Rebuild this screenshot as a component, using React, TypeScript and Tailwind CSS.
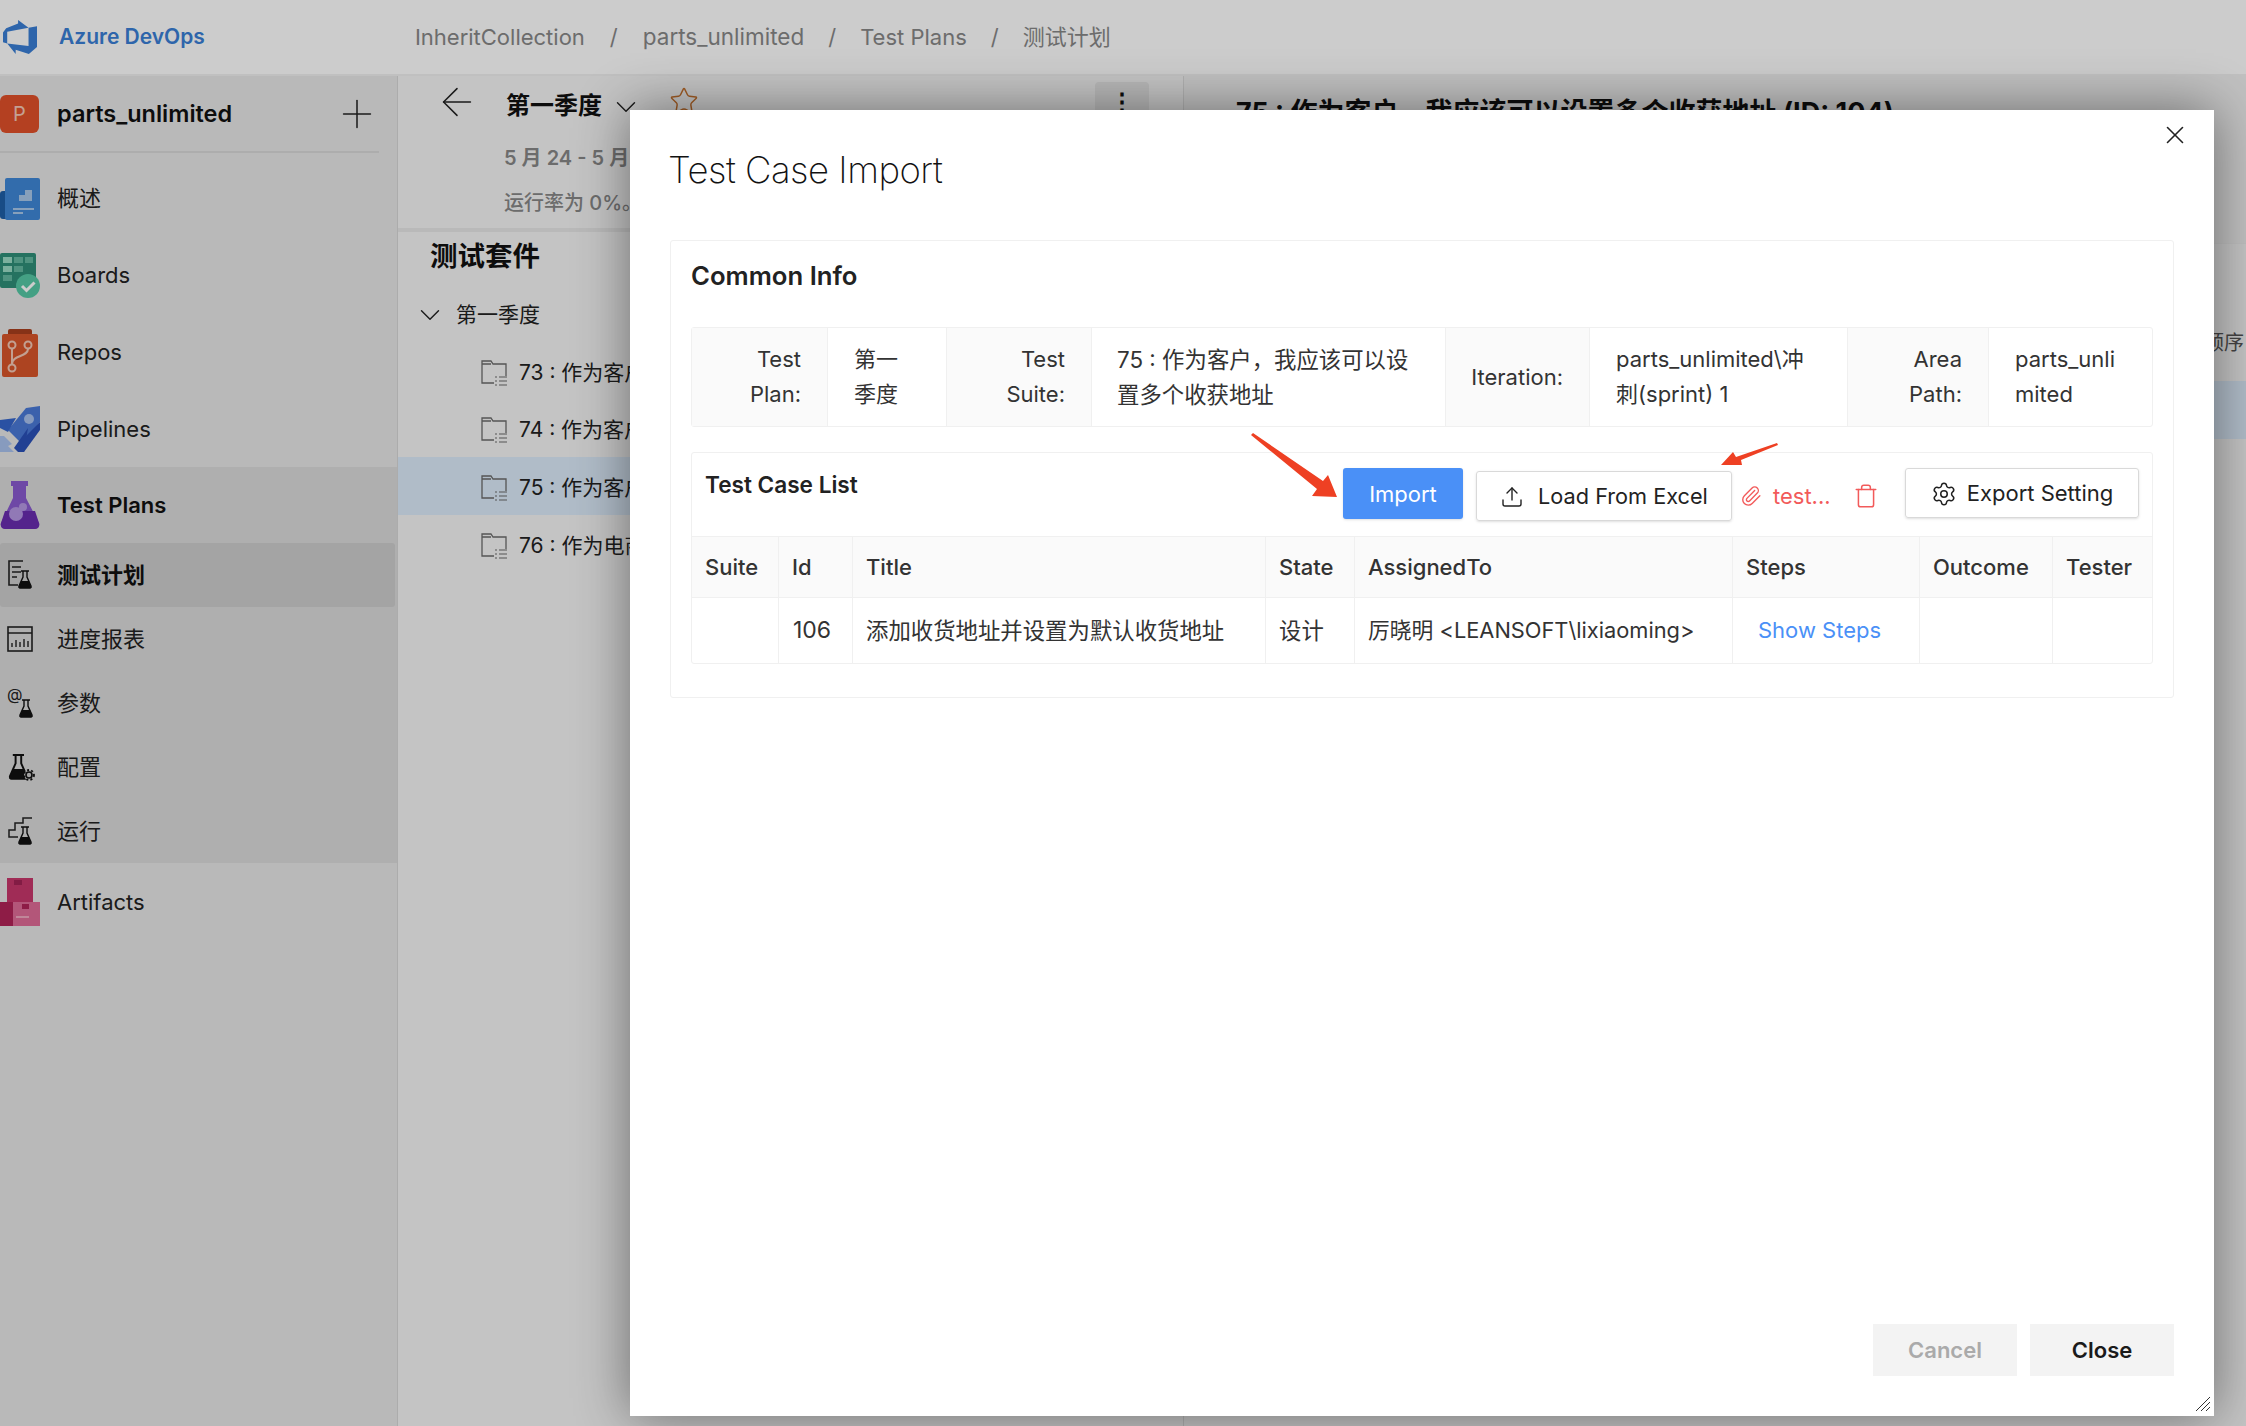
import React from 'react';
import { ArrowLeft, ChevronDown, Paperclip, Plus, Settings, Star, Trash, Upload, X } from 'lucide-react';

const FONT = "font-['Inter','Noto_Sans_CJK_SC',sans-serif]";

const AzureLogo = () => (
  <svg viewBox="0 0 24 24" className="h-[34px] w-[34px]" fill="#3a7fd6">
    <path d="M0 8.877L2.247 5.91l8.405-3.416V.022l7.37 5.393L2.966 8.338v8.225L0 15.707zm24-4.45v14.651l-5.753 4.9-9.303-3.057v3.056l-5.978-7.416 15.057 1.798V5.415z" />
  </svg>
);

const OverviewIcon = () => (
  <svg viewBox="0 0 40 44" className="h-[44px] w-[40px]">
    <rect x="0" y="14" width="14" height="28" rx="3" fill="#1f5fa8" />
    <rect x="5" y="1" width="35" height="42" rx="2" fill="#3f87d8" />
    <path d="M13 23h6v-6h6v-5h7v11z" fill="#a9c9ea" transform="translate(0 1)" />
    <rect x="13" y="31" width="21" height="2" fill="#a9c9ea" />
    <rect x="13" y="35" width="10" height="2" fill="#a9c9ea" />
  </svg>
);

const BoardsIcon = () => (
  <svg viewBox="0 0 40 46" className="h-[46px] w-[40px]">
    <rect x="0" y="0" width="36" height="35" rx="2" fill="#2f8f78" />
    <rect x="3" y="4" width="9" height="6" fill="#9bdcc6" />
    <rect x="14" y="4" width="9" height="6" fill="#63b8a0" />
    <rect x="25" y="4" width="8" height="6" fill="#63b8a0" />
    <rect x="3" y="13" width="9" height="6" fill="#9bdcc6" />
    <rect x="14" y="13" width="9" height="6" fill="#63b8a0" />
    <rect x="3" y="22" width="9" height="6" fill="#63b8a0" />
    <circle cx="28" cy="33" r="12" fill="#55c9a6" />
    <path d="M22 33l4.500 4.500 8-8" stroke="#fff" strokeWidth="3" fill="none" />
  </svg>
);

const ReposIcon = () => (
  <svg viewBox="0 0 40 48" className="h-[48px] w-[40px]">
    <rect x="8" y="0" width="24" height="8" rx="2" fill="#a93f1d" />
    <rect x="2" y="5" width="36" height="43" rx="2" fill="#d9562a" />
    <g stroke="#f3c9b6" strokeWidth="2" fill="none">
      <circle cx="12" cy="16" r="3.500" />
      <circle cx="28" cy="16" r="3.500" />
      <circle cx="12" cy="39" r="3.500" />
      <path d="M12 20v15M28 20c0 8-16 6-16 15" />
    </g>
  </svg>
);

const PipelinesIcon = () => (
  <svg viewBox="0 0 40 46" className="h-[46px] w-[40px]">
    <path d="M40 0v16L22 38 8 24 26 2z" fill="#4a7ad8" />
    <path d="M28 22L24 46h-6l-4-4z" fill="#2a50b8" />
    <path d="M40 16v8L24 46h-2l-4-8z" fill="#2a50b8" />
    <path d="M16 12L0 14v8l8 4z" fill="#3566cc" />
    <circle cx="29" cy="13" r="5" fill="#a9c2ee" />
    <path d="M0 30h4l8 8-4 2 6 6H0z" fill="#a9c2ee" />
  </svg>
);

const TestPlansIcon = () => (
  <svg viewBox="0 0 40 48" className="h-[48px] w-[40px]">
    <rect x="11" y="0" width="17" height="5" fill="#8a5ad0" />
    <path d="M13 5h13v12l13 25c1 3-1 6-4 6H5c-3 0-5-3-4-6l12-25z" fill="#8a5ad0" />
    <path d="M5 30h30l4 12c1 3-1 6-4 6H5c-3 0-5-3-4-6z" fill="#6a2cb0" />
    <circle cx="16" cy="33" r="7" fill="#b698e4" />
    <circle cx="23" cy="26" r="4" fill="#b698e4" />
  </svg>
);

const ArtifactsIcon = () => (
  <svg viewBox="0 0 40 48" className="h-[48px] w-[40px]">
    <rect x="7" y="0" width="26" height="24" fill="#c8386c" />
    <rect x="14" y="2" width="8" height="5" fill="#a32455" />
    <rect x="0" y="24" width="16" height="24" fill="#b22458" />
    <rect x="13" y="24" width="27" height="24" fill="#e06c98" />
    <rect x="22" y="26" width="7" height="5" fill="#b22458" />
    <rect x="16" y="38" width="13" height="2" fill="#f0a8c0" />
  </svg>
);

// little flask sits in the corner of most of the test plan sub icons
const Flask = ({ x, y, scale = 1 }: { x: number; y: number; scale?: number }) => (
  <g transform={`translate(${x} ${y}) scale(${scale})`}>
    <path d="M2 0h8M4 0v6L0 15c-.3 1 .3 2 1 2h10c.7 0 1.300-1 1-2L8 6V0" fill="none" stroke="#111" strokeWidth="1.400" />
    <path d="M2 10h8l2.500 7H-.5z" fill="#111" />
  </g>
);

const PlanIcon = () => (
  <svg viewBox="0 0 26 30" className="h-[30px] w-[26px]">
    <path d="M16 1H2v24h9" fill="none" stroke="#222" strokeWidth="1.600" />
    <path d="M5 7h9M5 12h9M5 17h5" stroke="#222" strokeWidth="1.400" />
    <Flask x={12} y={11} />
  </svg>
);

const ReportIcon = () => (
  <svg viewBox="0 0 26 26" className="h-[26px] w-[26px]">
    <rect x="1" y="1" width="24" height="24" fill="none" stroke="#222" strokeWidth="1.600" />
    <path d="M1 7h24M5 21v-4M9 21v-7M13 21v-5M17 21v-8M21 21v-6" stroke="#222" strokeWidth="1.400" />
  </svg>
);

const ParamIcon = () => (
  <svg viewBox="0 0 26 30" className="h-[30px] w-[26px]">
    <text x="0" y="12" fontSize="16" fill="#222" fontFamily="Inter">@</text>
    <Flask x={13} y={12} />
  </svg>
);

const ConfigIcon = () => (
  <svg viewBox="0 0 30 30" className="h-[30px] w-[30px]">
    <Flask x={3} y={3} scale={1.4} />
    <circle cx="22" cy="23" r="5" fill="#cbcbcb" />
    <circle cx="22" cy="23" r="3" fill="none" stroke="#111" strokeWidth="1.600" />
    <circle cx="22" cy="23" r="5" fill="none" stroke="#111" strokeWidth="1.800" strokeDasharray="2 2.200" />
  </svg>
);

const RunIcon = () => (
  <svg viewBox="0 0 26 30" className="h-[30px] w-[26px]">
    <path d="M11 21H2v-7h6V7h8V2h9" fill="none" stroke="#222" strokeWidth="1.500" />
    <Flask x={12} y={11} />
  </svg>
);

const SuiteIcon = () => (
  <svg viewBox="0 0 26 26" className="h-[26px] w-[26px] shrink-0">
    <path d="M13 23H1V1h9l2 3h13v12M1 4h9" fill="none" stroke="#6b6b6b" strokeWidth="1.300" />
    <path d="M18 17h8M18 21h8M18 25h8M14 17h2M14 21h2M14 25h2" stroke="#6b6b6b" strokeWidth="1.200" />
  </svg>
);

const navTop = [
  { label: '概述', icon: <OverviewIcon />, h: 'h-[77px]' },
  { label: 'Boards', icon: <BoardsIcon />, h: 'h-[77px]' },
  { label: 'Repos', icon: <ReposIcon />, h: 'h-[77px]' },
  { label: 'Pipelines', icon: <PipelinesIcon />, h: 'h-[76px]' },
];

const subNav = [
  { label: '进度报表', icon: <ReportIcon /> },
  { label: '参数', icon: <ParamIcon /> },
  { label: '配置', icon: <ConfigIcon /> },
  { label: '运行', icon: <RunIcon /> },
];

const suites = [
  { label: '73 : 作为客户，我应该', h: 'h-[58px]' },
  { label: '74 : 作为客户，我应该', h: 'h-[57px]' },
  { label: '75 : 作为客户，我应该', h: 'h-[58px]', selected: true },
  { label: '76 : 作为电商运营', h: 'h-[58px]' },
];

const columns = 'grid-cols-[87px_74px_413px_89px_378px_187px_133px_1fr]';
const headers = ['Suite', 'Id', 'Title', 'State', 'AssignedTo', 'Steps', 'Outcome', 'Tester'];

const Sidebar = () => (
  <aside className="w-[398px] shrink-0 border-r border-[#d8d8d8] bg-[#e8e8e8]">
    <div className="mb-[7px] mr-[18px] flex h-[77px] items-center border-b-2 border-[#d9d9d9]">
      <div className="flex h-[38px] w-[39px] items-center justify-center rounded-[6px] bg-[#e2512a] text-[20px] text-[#f6c9b8]">P</div>
      <span className="ml-[18px] text-[23.5px] font-semibold text-[#111]">parts_unlimited</span>
      <Plus className="-mr-[1px] ml-auto h-[46px] w-[46px] text-[#222]" strokeWidth={0.8} />
    </div>
    {navTop.map((item) => (
      <div key={item.label} className={`flex items-center ${item.h}`}>
        <div className="flex w-[57px] shrink-0">{item.icon}</div>
        <span className="text-[22px] text-[#222]">{item.label}</span>
      </div>
    ))}
    <div className="h-[396px] bg-[#dbdbdb]">
      <div className="flex h-[76px] items-center">
        <div className="flex w-[57px] shrink-0"><TestPlansIcon /></div>
        <span className="text-[22px] font-semibold text-[#111]">Test Plans</span>
      </div>
      <div className="mr-[2px] flex h-[64px] items-center rounded-[3px] bg-[#cecece]">
        <div className="flex w-[57px] shrink-0 pl-[7px]"><PlanIcon /></div>
        <span className="text-[22px] font-semibold text-[#111]">测试计划</span>
      </div>
      {subNav.map((item) => (
        <div key={item.label} className="flex h-[64px] items-center">
          <div className="flex w-[57px] shrink-0 pl-[7px]">{item.icon}</div>
          <span className="text-[22px] text-[#222]">{item.label}</span>
        </div>
      ))}
    </div>
    <div className="flex h-[78px] items-center">
      <div className="flex w-[57px] shrink-0"><ArtifactsIcon /></div>
      <span className="text-[22px] text-[#222]">Artifacts</span>
    </div>
  </aside>
);

const SuitePanel = () => (
  <section className="w-[786px] shrink-0 border-r border-[#dcdcdc] bg-[#f6f6f6]">
    <div className="h-[156px] border-b-4 border-[#e8e8e8]">
      <div className="flex h-[62px] items-center">
        <ArrowLeft className="-mt-[10px] ml-[36px] h-[46px] w-[46px] text-[#222]" strokeWidth={0.8} />
        <span className="-mt-[2px] ml-[26px] w-[96px] whitespace-nowrap text-[24px] font-semibold text-[#111]">第一季度</span>
        <ChevronDown className="ml-[7px] h-[34px] w-[34px] text-[#222]" strokeWidth={1} />
        <Star className="-mt-[12px] ml-[26px] h-[30px] w-[30px] text-[#c9742f]" strokeWidth={1.2} />
        <div className="ml-[396px] mt-[6px] flex h-[40px] w-[54px] items-center justify-center self-start rounded-[4px] bg-[#e6e6e6] text-[24px] font-bold text-[#111]">⋮</div>
      </div>
      <div className="ml-[106px] mt-[5px] text-[20px] font-semibold text-[#888]">5 月 24 - 5 月 30</div>
      <div className="ml-[106px] mt-[15px] text-[20px] font-medium text-[#888]">运行率为 0%。</div>
    </div>
    <h2 className="ml-[32px] mt-[3px] text-[27.5px] leading-[42px] font-bold text-[#111]">测试套件</h2>
    <div className="mt-[20px] flex h-[36px] items-center">
      <ChevronDown className="ml-[15px] h-[34px] w-[34px] text-[#222]" strokeWidth={1} />
      <span className="ml-[9px] text-[21px] text-[#222]">第一季度</span>
    </div>
    <div className="mt-[9px]">
      {suites.map((s) => (
        <div key={s.label} className={`flex items-center pt-[3px] ${s.h} ${s.selected ? 'bg-[#dcebfa]' : ''}`}>
          <div className="ml-[83px]"><SuiteIcon /></div>
          <span className="ml-[12px] text-[21px] text-[#222]">{s.label}</span>
        </div>
      ))}
    </div>
  </section>
);

const DetailPanel = () => (
  <section className="min-w-0 flex-1 bg-[#f6f6f6]">
    <div className="h-[168px] border-b border-[#eee] bg-[#f0f0f0] pl-[52px] pt-[17px]">
      <div className="whitespace-nowrap text-[27px] font-bold text-[#111]">75 : 作为客户，我应该可以设置多个收获地址 (ID: 104)</div>
    </div>
    <div className="flex h-[137px] items-center justify-end pt-[60px] pr-[2px] text-[20px] text-[#555]">执行顺序</div>
    <div className="h-[58px] bg-[#dcebfa]" />
  </section>
);

const Descriptions = () => (
  <div className={`grid h-[100px] grid-cols-[136px_119px_145px_354px_144px_258px_141px_1fr] rounded-[3px] border border-[#f0f0f0] text-[22px] leading-[35px] text-[#333]`}>
    <div className="flex items-center justify-end border-r border-[#f0f0f0] bg-[#fafafa] pr-[26px] text-right">Test<br />Plan:</div>
    <div className="flex items-center border-r border-[#f0f0f0] pl-[26px]">第一<br />季度</div>
    <div className="flex items-center justify-end border-r border-[#f0f0f0] bg-[#fafafa] pr-[26px] text-right">Test<br />Suite:</div>
    <div className="flex items-center border-r border-[#f0f0f0] pl-[25px] text-[22.4px]">75 : 作为客户，我应该可以设<br />置多个收获地址</div>
    <div className="flex items-center justify-end border-r border-[#f0f0f0] bg-[#fafafa] pr-[26px] text-right">Iteration:</div>
    <div className="flex items-center border-r border-[#f0f0f0] pl-[26px]">parts_unlimited\冲<br />刺(sprint) 1</div>
    <div className="flex items-center justify-end border-r border-[#f0f0f0] bg-[#fafafa] pr-[26px] text-right">Area<br />Path:</div>
    <div className="flex items-center pl-[26px]">parts_unli<br />mited</div>
  </div>
);

const CaseList = () => (
  <div className="mt-[25px] rounded-[3px] border border-[#f0f0f0]">
    <div className="flex h-[83px] text-[22px]">
      <div className="pl-[13px] pt-[15px] text-[22.6px] font-semibold text-[#222]">Test Case List</div>
      <div className="ml-auto flex items-start pr-[13px] pt-[15px]">
        <button className="h-[51px] w-[120px] rounded-[3px] bg-[#4a90f7] pt-[1px] text-white shadow-sm">Import</button>
        <button className="ml-[13px] mt-[3px] flex h-[50px] w-[256px] items-center justify-center gap-[14px] rounded-[3px] border border-[#d9d9d9] pt-[1px] text-[21.7px] text-[#222] shadow-sm">
          <Upload className="h-[24px] w-[24px]" strokeWidth={1.4} />
          Load From Excel
        </button>
        <div className="ml-[8px] mt-[3px] flex h-[50px] items-center text-[#f25a5a]">
          <Paperclip className="h-[22px] w-[22px]" strokeWidth={1.5} />
          <span className="ml-[11px] w-[58px] text-[22px]">test...</span>
          <Trash className="ml-[22px] h-[26px] w-[26px]" strokeWidth={1.4} />
        </div>
        <button className="ml-[26px] flex h-[50px] w-[234px] items-center justify-center gap-[10px] rounded-[3px] border border-[#d9d9d9] pt-[1px] text-[#222] shadow-sm">
          <Settings className="h-[26px] w-[26px]" strokeWidth={1.4} />
          Export Setting
        </button>
      </div>
    </div>
    <div className={`grid h-[62px] ${columns} border-y border-[#f0f0f0] bg-[#fafafa] text-[22px] font-medium text-[#333]`}>
      {headers.map((h, i) => (
        <div key={h} className={`flex items-center pl-[13px] ${i < headers.length - 1 ? 'border-r border-[#f0f0f0]' : ''}`}>{h}</div>
      ))}
    </div>
    <div className={`grid h-[65px] ${columns} text-[22px] text-[#333]`}>
      <div className="border-r border-[#f0f0f0]" />
      <div className="flex items-center border-r border-[#f0f0f0] pl-[14px] text-[23px]">106</div>
      <div className="flex items-center border-r border-[#f0f0f0] pl-[13px] text-[22.4px]">添加收货地址并设置为默认收货地址</div>
      <div className="flex items-center border-r border-[#f0f0f0] pl-[13px] text-[22.4px]">设计</div>
      <div className="flex items-center border-r border-[#f0f0f0] pl-[13px] text-[21.8px]">厉晓明 &lt;LEANSOFT\lixiaoming&gt;</div>
      <div className="flex items-center border-r border-[#f0f0f0] pl-[25px] text-[#4a90f7]">Show Steps</div>
      <div className="border-r border-[#f0f0f0]" />
      <div />
    </div>
  </div>
);

const App: React.FC = () => {
  return (
    <div className={`relative h-[1426px] w-[2246px] overflow-hidden bg-white ${FONT}`}>
      <header className="flex h-[76px] items-center border-b-2 border-[#f0f0f0] bg-white">
        <div className="ml-[3px]"><AzureLogo /></div>
        <span className="ml-[22px] text-[21px] font-semibold text-[#3a7fd6]">Azure DevOps</span>
        <nav className="ml-[210px] flex items-center text-[22px] text-[#888]">
          <span>InheritCollection</span>
          <span className="mx-[25px]">/</span>
          <span className="text-[22.5px]">parts_unlimited</span>
          <span className="mx-[24px]">/</span>
          <span>Test Plans</span>
          <span className="mx-[24px]">/</span>
          <span>测试计划</span>
        </nav>
      </header>

      <div className="flex h-[1350px]">
        <Sidebar />
        <SuitePanel />
        <DetailPanel />
      </div>

      {/* dim layer behind the dialog */}
      <div className="absolute inset-0 bg-black/20" />

      <div className="absolute left-[630px] top-[110px] flex h-[1306px] w-[1584px] flex-col bg-white px-[40px] shadow-[0_0_50px_rgba(0,0,0,0.45)]">
        <X className="absolute right-[24px] top-[10px] h-[30px] w-[30px] text-[#222]" strokeWidth={1.3} />
        <h1 className="-ml-[2px] mt-[30px] text-[36.5px] leading-[60px] font-extralight tracking-[-0.5px] text-[#111]">Test Case Import</h1>
        <div className="mt-[40px] h-[458px] w-[1504px] rounded-[3px] border border-[#f0f0f0] px-[20px]">
          <h3 className="mb-[16px] flex h-[70px] items-center text-[25.7px] font-semibold text-[#222]">Common Info</h3>
          <Descriptions />
          <CaseList />
        </div>
        <div className="mb-[40px] mt-auto flex justify-end gap-[13px]">
          <button className="h-[52px] w-[144px] bg-[#f3f3f3] text-[22px] font-semibold text-[#aaa]">Cancel</button>
          <button className="h-[52px] w-[144px] bg-[#f3f3f3] text-[22px] font-semibold text-[#1a1a1a]">Close</button>
        </div>
        <svg viewBox="0 0 16 16" className="absolute bottom-[4px] right-[3px] h-[16px] w-[16px]" stroke="#333" strokeWidth="1">
          <path d="M1 15L15 1M6 15L15 6M11 15l4-4" />
        </svg>
      </div>

      {/* annotation arrows drawn on the screenshot */}
      <svg className="absolute left-[1240px] top-[430px] h-[80px] w-[110px]" viewBox="0 0 110 80">
        <polygon points="11,5 13,3 83,51 88,45 97,67 72,66 77,59" fill="#ee4023" />
      </svg>
      <svg className="absolute left-[1715px] top-[438px] h-[32px] w-[70px]" viewBox="0 0 70 32">
        <polygon points="62,5 63,7 26,22 27,27 6,27 18,14 21,19" fill="#ee4023" />
      </svg>
    </div>
  );
};

export default App;
